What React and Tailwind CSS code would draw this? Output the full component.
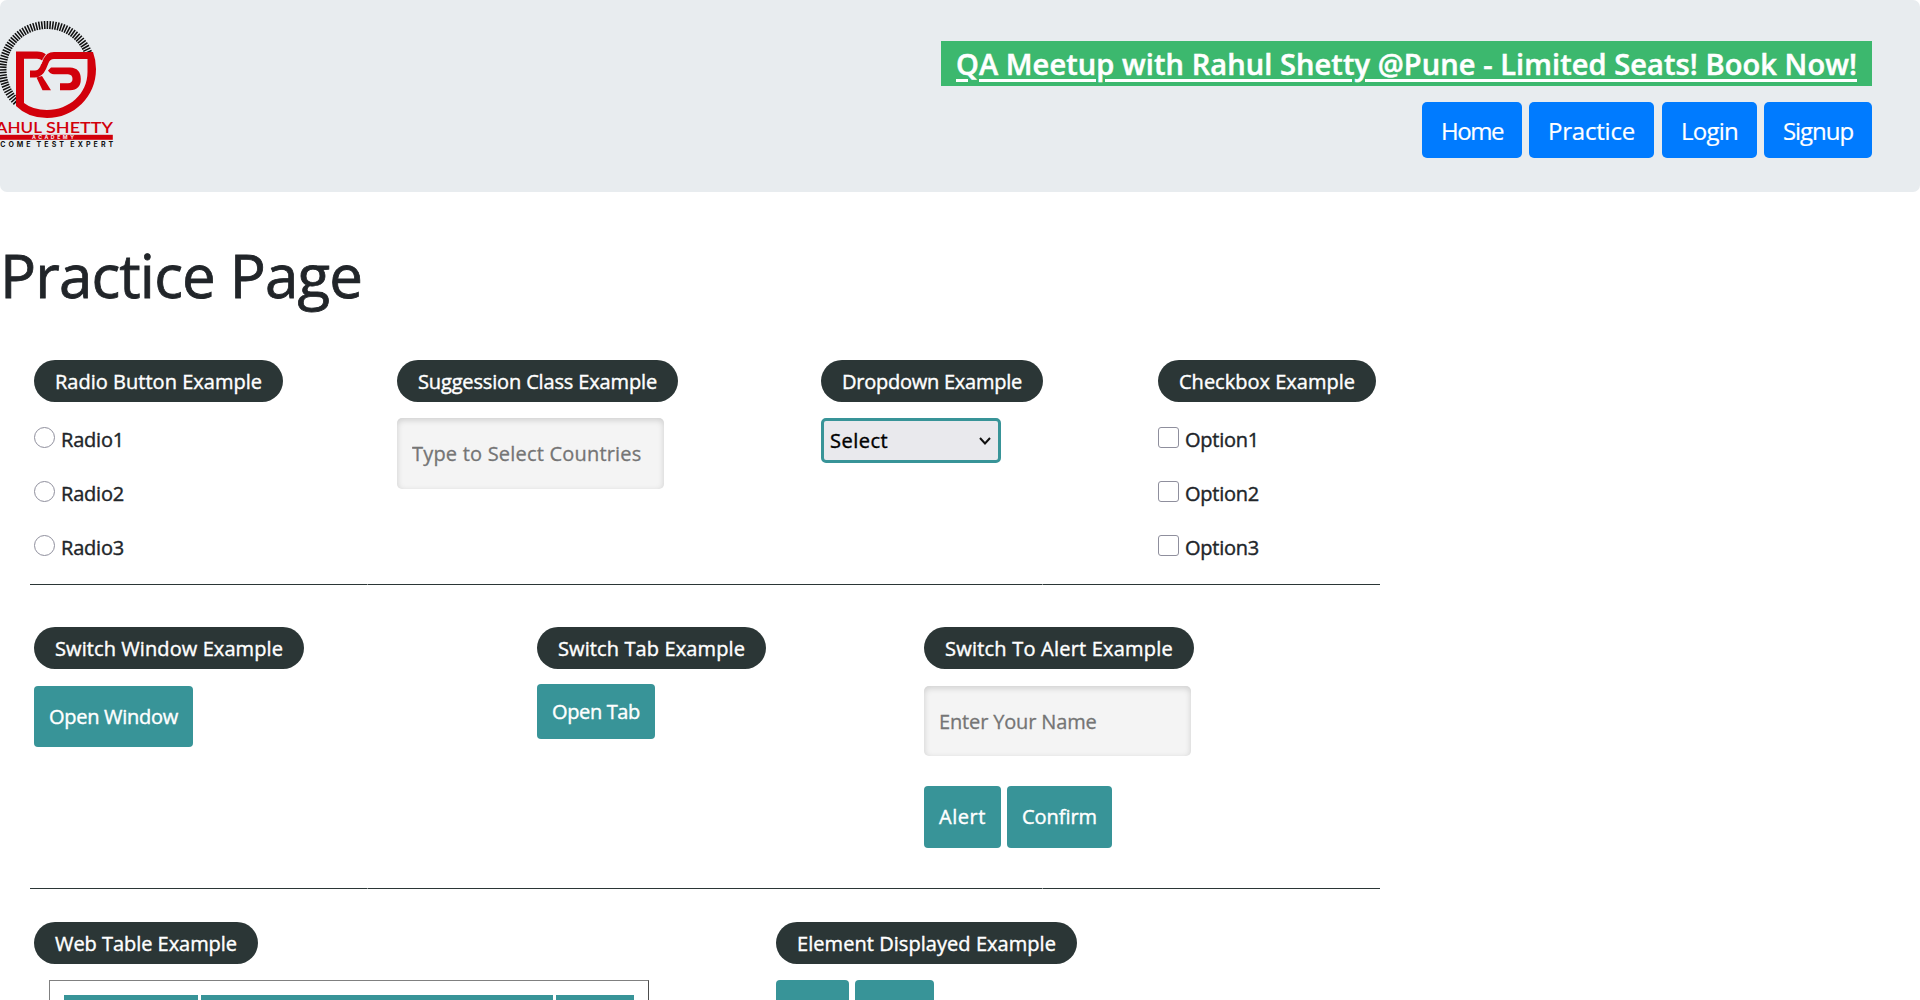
import { useLayoutEffect, useRef } from "react";

// Inline text whose letter spacing is adjusted to fill a given width.
function Fit({ w, children }) {
  const ref = useRef(null);
  useLayoutEffect(() => {
    const el = ref.current;
    el.style.letterSpacing = "0px";
    const natural = el.getBoundingClientRect().width;
    el.style.letterSpacing = (w - natural) / children.length + "px";
  }, [w, children]);
  return (
    <span ref={ref} className="inline-block whitespace-nowrap">
      {children}
    </span>
  );
}

function Legend({ w, children }) {
  return (
    <div className="flex h-[42px] w-fit items-center rounded-full bg-[#2b3636] px-[21px] pt-0.5 text-white [-webkit-text-stroke:0.4px]">
      <Fit w={w}>{children}</Fit>
    </div>
  );
}

function TealButton({ w, className, children }) {
  return (
    <button className={"flex items-center justify-center rounded bg-[#389498] text-white [-webkit-text-stroke:0.4px] " + className}>
      <Fit w={w}>{children}</Fit>
    </button>
  );
}

function Choices({ type, names, w }) {
  return (
    <div className="mt-4">
      {names.map((n) => (
        <label key={n} className="flex h-[54px] items-start">
          <input
            type={type}
            name={type}
            className={
              "mt-0.5 size-[21px] shrink-0 appearance-none border border-[#8f8f9d] bg-white " +
              (type === "radio" ? "rounded-full" : "rounded-[3px]")
            }
          />
          <span className="ml-1.5 pt-0.5 text-[#212529] [-webkit-text-stroke:0.4px]">
            <Fit w={w}>{n}</Fit>
          </span>
        </label>
      ))}
    </div>
  );
}

function TextInput({ placeholder, className }) {
  return (
    <input
      placeholder={placeholder}
      className={
        "block w-[267px] rounded-[5px] bg-[#f4f4f4] px-[15px] shadow-[inset_0_2px_6px_rgba(0,0,0,0.16)] outline-none [-webkit-text-stroke:0.3px] placeholder:text-[#757575] " +
        className
      }
    />
  );
}

function Rule() {
  return (
    <div className="flex h-px w-[1350px] gap-px bg-[#8a9090]">
      <div className="w-[337px] bg-[#2b3636]" />
      <div className="w-[674px] bg-[#2b3636]" />
      <div className="flex-1 bg-[#2b3636]" />
    </div>
  );
}

function Logo() {
  const ticks = [];
  for (let a = -226; a <= -20; a += 3.5) {
    const r = (a * Math.PI) / 180;
    const c = Math.cos(r);
    const s = Math.sin(r);
    ticks.push(`M${(47 + 40.5 * c).toFixed(2)} ${(69.5 + 40.5 * s).toFixed(2)}L${(47 + 48.5 * c).toFixed(2)} ${(69.5 + 48.5 * s).toFixed(2)}`);
  }
  return (
    <svg className="block h-[150px] w-[120px]" viewBox="0 0 120 150">
      <path d={ticks.join("")} stroke="#111" strokeWidth="1.55" />
      <g fill="#d2000b">
        <path d="M16 51.5H37Q43 51.5 46 54.5L43 61Q40 58.7 37 58.7H24V103Q33 110 47 110C69 110 87.5 94 87.5 72V59H54Q50 59 48.5 63L46 69Q42 77.5 35 77.5H30V70.5H35Q38 70.5 40 67L43 60Q46 52 54 52H93Q96 60 96 69C96 97 74 118 47 118Q28 118 16 106Z" />
        <path d="M36.5 77.5L42 76L51 90.3H42.5Z" />
        <path d="M51 67.5H70Q80.8 68 80.8 79Q80.8 90 70 90.3H60V83.3H68Q72.5 83 72.5 79Q72.5 74.6 68 74.3H54Q50 74 48 70.5Z" />
      </g>
      <g fill="none" stroke="#e8ecef" strokeWidth="0.8">
        <path d="M46 54.5Q43 58 41 64" />
      </g>
      <g fill="#d2000b" fontFamily="Lato, sans-serif" fontWeight="600" fontSize="15.6">
        <text x="-15" y="133" textLength="57" lengthAdjust="spacingAndGlyphs">RAHUL</text>
        <text x="46" y="133" textLength="67" lengthAdjust="spacingAndGlyphs">SHETTY</text>
      </g>
      <rect x="-5" y="134.8" width="117.8" height="5" fill="#d2000b" />
      <g fontFamily="Inter, sans-serif" fontWeight="700">
        <text x="32" y="139.2" fontSize="5.2" fill="#f3e9eb" textLength="42" lengthAdjust="spacing">ACADEMY</text>
        <g fontSize="7" fill="#111">
          <text x="-14.5" y="146.7" textLength="45" lengthAdjust="spacing">BECOME</text>
          <text x="36.5" y="146.7" textLength="27.5" lengthAdjust="spacing">TEST</text>
          <text x="70.3" y="146.7" textLength="43" lengthAdjust="spacing">EXPERT</text>
        </g>
      </g>
    </svg>
  );
}

const NAV = [
  ["Home", 62, "w-[100px]"],
  ["Practice", 87, "w-[125px] ml-[7px]"],
  ["Login", 57, "w-[95px] ml-2"],
  ["Signup", 70, "w-[108px] ml-[7px]"],
];

export default function App() {
  return (
    <div className="h-[1000px] overflow-hidden bg-white font-['Open_Sans',sans-serif] text-[20px] leading-[26px]">
      <header className="flex h-48 justify-between rounded-[7px] bg-[#e8ecef] pr-12">
        <Logo />
        <div className="flex flex-col items-end pt-[41px]">
          <a className="flex h-[45px] w-[931px] items-center bg-[#3cb86e] px-[15px] text-[29px] font-semibold text-white underline decoration-[3px] underline-offset-[4px] [-webkit-text-stroke:0.5px]">
            <Fit w={901}>QA Meetup with Rahul Shetty @Pune - Limited Seats! Book Now!</Fit>
          </a>
          <nav className="mt-4 flex text-[24px] text-white [-webkit-text-stroke:0.2px]">
            {NAV.map(([name, w, cls]) => (
              <button key={name} className={"h-14 rounded-[5px] bg-[#007bff] pt-px " + cls}>
                <Fit w={w}>{name}</Fit>
              </button>
            ))}
          </nav>
        </div>
      </header>

      <h1 className="mt-[41px] h-[127px] text-[60px] leading-[84px] text-[#212529] [-webkit-text-stroke:0.8px]">
        <Fit w={362}>Practice Page</Fit>
      </h1>

      <main className="ml-[30px] w-[1350px]">
        <section className="flex h-56 pl-1">
          <div className="w-[363px]">
            <Legend w={207}>Radio Button Example</Legend>
            <div className="pt-[7px]">
              <Choices type="radio" names={["Radio1", "Radio2", "Radio3"]} w={63} />
            </div>
          </div>
          <div className="w-[424px]">
            <Legend w={239}>Suggession Class Example</Legend>
            <TextInput placeholder="Type to Select Countries" className="mt-4 h-[71px] tracking-[0.2px]" />
          </div>
          <div className="w-[337px]">
            <Legend w={180}>Dropdown Example</Legend>
            <div className="relative mt-4 w-[180px]">
              <select className="block h-[45px] w-full appearance-none rounded-[5px] border-[3px] border-[#389498] bg-[#e9e9ed] pl-[6px] text-black outline-none tracking-[0.5px] [-webkit-text-stroke:0.4px]">
                <option>Select</option>
              </select>
              <svg className="pointer-events-none absolute top-[19px] right-[10px] h-2 w-3" viewBox="0 0 12 8" fill="none" stroke="#111" strokeWidth="2">
                <path d="M1 1L6 6.5L11 1" />
              </svg>
            </div>
          </div>
          <div>
            <Legend w={176}>Checkbox Example</Legend>
            <div className="pt-[7px]">
              <Choices type="checkbox" names={["Option1", "Option2", "Option3"]} w={74} />
            </div>
          </div>
        </section>
        <Rule />

        <section className="flex h-[303px] pt-[42px] pl-1">
          <div className="w-[503px]">
            <Legend w={228}>Switch Window Example</Legend>
            <TealButton w={129} className="mt-[17px] h-[61px] w-[159px]">Open Window</TealButton>
          </div>
          <div className="w-[387px]">
            <Legend w={187}>Switch Tab Example</Legend>
            <TealButton w={88} className="mt-[15px] h-[55px] w-[118px]">Open Tab</TealButton>
          </div>
          <div>
            <Legend w={228}>Switch To Alert Example</Legend>
            <TextInput placeholder="Enter Your Name" className="mt-[17px] h-[70px] tracking-[-0.15px]" />
            <div className="mt-[30px] flex gap-1.5">
              <TealButton w={47} className="h-[62px] w-[77px]">Alert</TealButton>
              <TealButton w={75} className="h-[62px] w-[105px]">Confirm</TealButton>
            </div>
          </div>
        </section>
        <Rule />

        <section className="flex pt-[33px] pl-1">
          <div className="w-[742px]">
            <Legend w={182}>Web Table Example</Legend>
            <div className="mt-4 ml-[15px] h-[100px] w-[600px] border border-t-[#808080] border-r-[#4d4d4d] border-l-[#808080] px-3.5 pt-3.5">
              <div className="flex gap-[3px]">
                <div className="h-12 w-[134px] bg-[#389498]" />
                <div className="h-12 w-[352px] bg-[#389498]" />
                <div className="h-12 flex-1 bg-[#389498]" />
              </div>
            </div>
          </div>
          <div>
            <Legend w={259}>Element Displayed Example</Legend>
            <div className="mt-4 flex gap-1.5">
              <div className="h-[62px] w-[73px] rounded bg-[#389498]" />
              <div className="h-[62px] w-[79px] rounded bg-[#389498]" />
            </div>
          </div>
        </section>
      </main>
    </div>
  );
}
